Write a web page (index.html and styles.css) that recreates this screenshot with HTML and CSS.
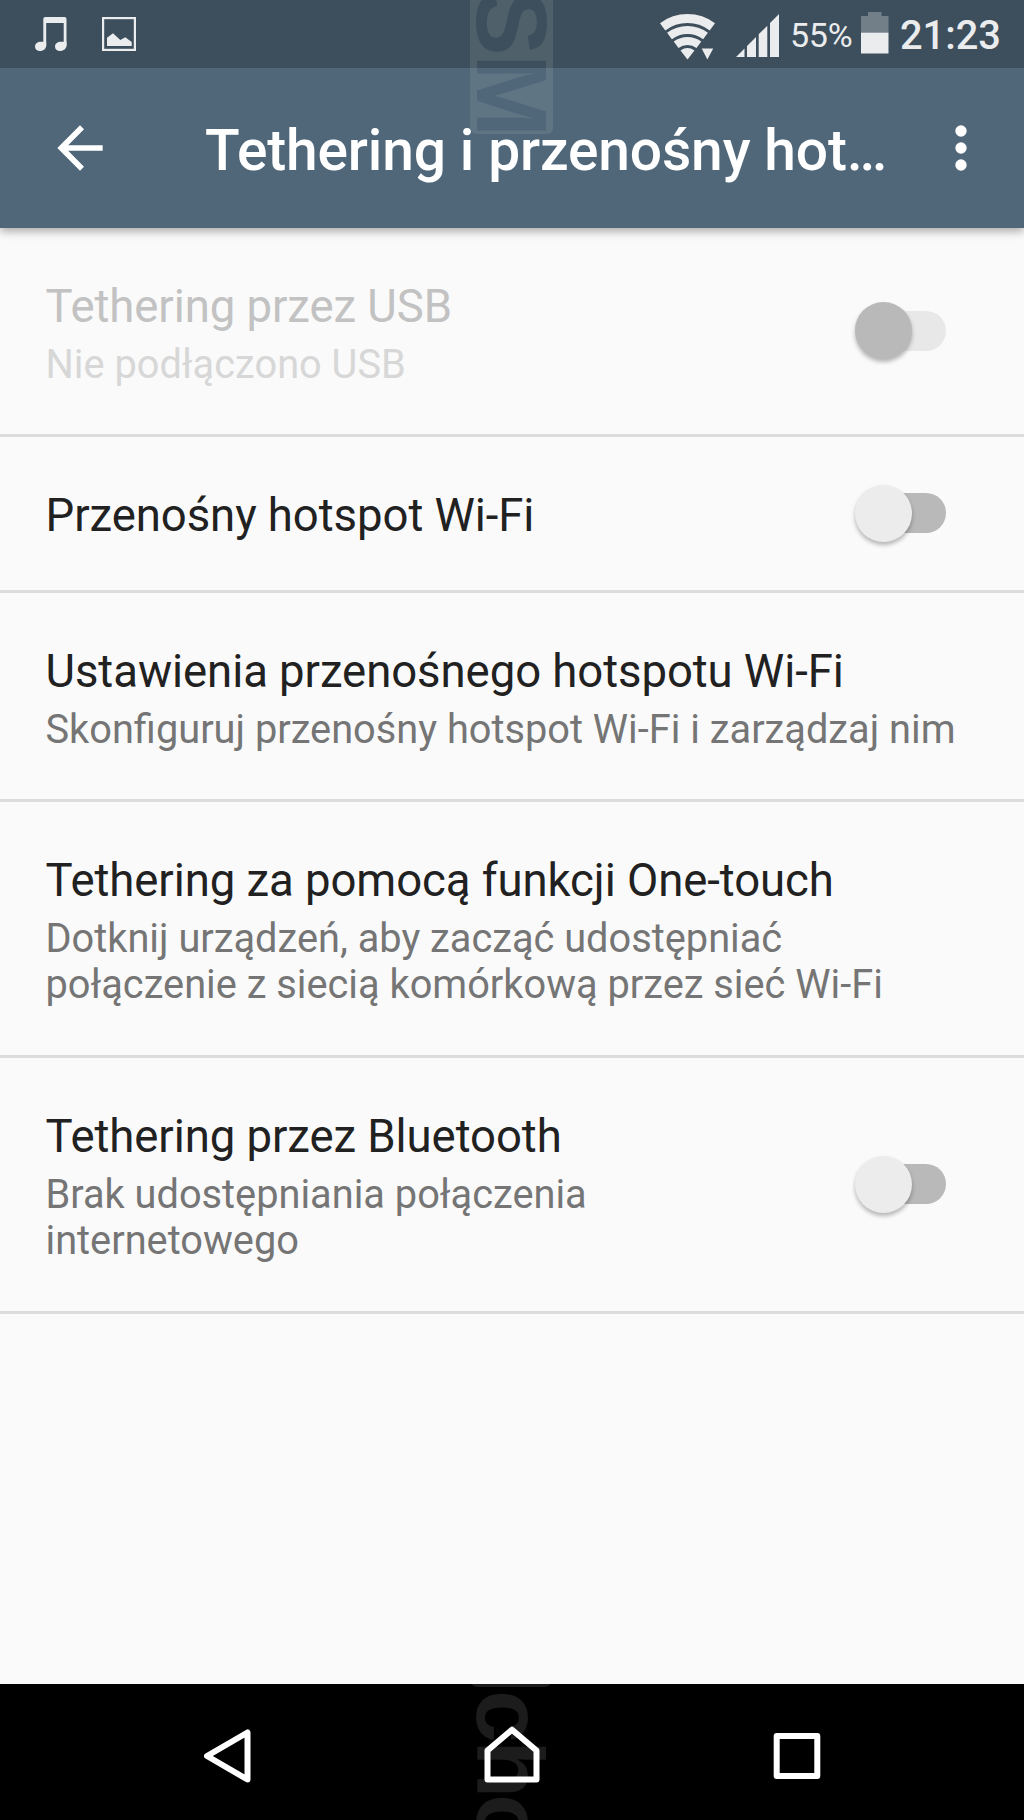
FILE: index.html
```html
<!DOCTYPE html>
<html lang="pl">
<head>
    <meta charset="UTF-8">
    <meta name="viewport" content="width=device-width, initial-scale=1.0">
    <title>Tethering i przenośny hotspot</title>
    <link rel="stylesheet" href="styles.css">
</head>
<body>
    <div class="phone">
        <!-- status bar -->
        <div class="status-bar">
            <svg class="music" width="32" height="34" viewBox="0 0 32 34">
                <path d="M8.3 2a2 2 0 0 1 2-2h19.200a2 2 0 0 1 2 2V29h-2.800V6H11.200V29H8.300z"/>
                <path d="M0 29.500C0 26.500 2.500 24.800 6 24.800H11.200V28.500C11.200 31.500 8.500 34 5 34 2 34 0 32.300 0 29.500z"/>
                <path d="M20 29.500C20 26.500 22.500 24.800 26 24.800H31.500V28.500C31.500 31.500 28.500 34 25 34 22 34 20 32.300 20 29.500z"/>
            </svg>
            <svg class="picture" width="34" height="34" viewBox="0 0 34 34">
                <rect x="1.100" y="1.100" width="31.800" height="31.800" fill="none" stroke="#eaecee" stroke-width="2.200"/>
                <path d="M5 20.800L11 16.200L18.300 23L23.300 20.300L29.700 25V29H5z"/>
            </svg>
            <div class="status-right">
                <svg class="wifi" width="55" height="46" viewBox="0 0 55 46">
                    <g fill="none" stroke="#eaecee">
                        <path stroke-width="9" d="M2.600 12.800A41.500 41.500 0 0 1 52.400 12.800"/>
                        <path stroke-width="8" d="M9.500 22A30 30 0 0 1 45.500 22"/>
                        <path stroke-width="8" d="M16.100 30.800A19 19 0 0 1 38.900 30.800"/>
                    </g>
                    <path d="M20.500 36.500A12.300 12.300 0 0 1 34.500 36.500L27.500 45.500z"/>
                    <path d="M41.700 34.500H53.200L47.400 45.500z"/>
                </svg>
                <svg class="signal" width="43" height="43" viewBox="0 0 43 43">
                    <path d="M0 43L8.500 34.500V43zM11 43V32L20 23V43zM22.700 43V20.300L31.300 11.700V43zM34 43V9L43 0V43z"/>
                </svg>
                <span class="percent">55%</span>
                <svg class="battery" width="28" height="42" viewBox="0 0 28 42">
                    <path fill="#727f89" d="M0 4H7V0H20.500V4H27.500V21H0z"/>
                    <path d="M0 20.700H27.500V41.500H0z"/>
                </svg>
                <span class="clock">21:23</span>
            </div>
        </div>

        <!-- app bar -->
        <div class="app-bar">
            <svg class="back" width="68" height="68" viewBox="0 0 24 24">
                <path d="M20 11H7.830l5.590-5.590L12 4l-8 8 8 8 1.410-1.410L7.830 13H20v-2z"/>
            </svg>
            <h1>Tethering i przenośny hot…</h1>
            <svg class="more" width="68" height="68" viewBox="0 0 24 24">
                <circle cx="12" cy="6" r="2"/>
                <circle cx="12" cy="12" r="2"/>
                <circle cx="12" cy="18" r="2"/>
            </svg>
        </div>

        <!-- watermark over both bars -->
        <svg class="watermark" width="83" height="134" viewBox="0 0 83 134">
            <defs>
                <linearGradient id="bars" gradientUnits="userSpaceOnUse" x1="0" y1="0" x2="136" y2="0">
                    <stop offset="50%" stop-color="#3d4e5c"/>
                    <stop offset="50%" stop-color="#50677a"/>
                </linearGradient>
            </defs>
            <rect y="-20" width="83" height="154" rx="6" fill="#aec0b4" fill-opacity=".17"/>
            <text class="mark" transform="translate(7 0) rotate(90)" x="-11 54" y="0" fill="url(#bars)">SM</text>
        </svg>

        <!-- settings -->
        <div class="list">
            <div class="row disabled">
                <div class="text">
                    <h2>Tethering przez USB</h2>
                    <p>Nie podłączono USB</p>
                </div>
                <div class="switch"><span class="thumb"></span></div>
            </div>
            <div class="row single">
                <div class="text">
                    <h2>Przenośny hotspot Wi-Fi</h2>
                </div>
                <div class="switch"><span class="thumb"></span></div>
            </div>
            <div class="row">
                <div class="text">
                    <h2>Ustawienia przenośnego hotspotu Wi-Fi</h2>
                    <p>Skonfiguruj przenośny hotspot Wi-Fi i zarządzaj nim</p>
                </div>
            </div>
            <div class="row tall">
                <div class="text">
                    <h2>Tethering za pomocą funkcji One-touch</h2>
                    <p>Dotknij urządzeń, aby zacząć udostępniać<br>połączenie z siecią komórkową przez sieć Wi-Fi</p>
                </div>
            </div>
            <div class="row tall">
                <div class="text">
                    <h2>Tethering przez Bluetooth</h2>
                    <p>Brak udostępniania połączenia<br>internetowego</p>
                </div>
                <div class="switch"><span class="thumb"></span></div>
            </div>
        </div>

        <!-- navigation bar -->
        <div class="nav-bar">
            <svg class="nav-mark" width="83" height="136" viewBox="0 0 83 136">
                <rect x="1" y="-20" width="80" height="23" rx="6" fill="#1c1c1c"/>
                <text class="mark small" transform="translate(7 0) rotate(90)" x="6 56 110" y="0" fill="#1c1c1c">cho</text>
            </svg>
            <svg class="nav-icon" width="60" height="60" viewBox="0 0 60 60">
                <path d="M50.500 6.500V53.500L10 30z"/>
            </svg>
            <svg class="nav-icon" width="60" height="60" viewBox="0 0 60 60">
                <path d="M5.500 53.500V24.500L30 3.700L54.500 24.500V53.500z"/>
            </svg>
            <svg class="nav-icon" width="60" height="60" viewBox="0 0 60 60">
                <path d="M9.700 10H50.300V50H9.700z"/>
            </svg>
        </div>
    </div>
</body>
</html>
```
FILE: styles.css
```css
* {
    margin: 0;
    padding: 0;
    box-sizing: border-box;
}

body {
    font-family: Roboto, "Liberation Sans", sans-serif;
    background: #fafafa;
}

svg {
    display: block;
    flex-shrink: 0;
}

.phone {
    position: relative;
    display: flex;
    flex-direction: column;
    width: 1024px;
    height: 1820px;
    overflow: hidden;
    background: #fafafa;
}

/* status bar */
.status-bar {
    position: relative; /* stays above the app bar shadow */
    display: flex;
    align-items: flex-start;
    height: 68px;
    padding-left: 35px;
    background: #3d4e5c;
    color: #eaecee;
    fill: #eaecee;
}

.music {
    margin-top: 17px;
}

.picture {
    margin: 17px 0 0 35px;
}

.status-right {
    display: flex;
    margin-left: auto;
    padding-right: 22px;
}

.wifi {
    margin: 14px 21px 0 0;
}

.signal {
    margin: 14px 11px 0 0;
}

.percent {
    width: 71px;
    margin-top: 15px;
    font-size: 34.1px;
    line-height: 40px;
    letter-spacing: -0.3px;
}

.battery {
    margin-top: 12px;
}

.clock {
    width: 102px;
    margin: 12px 0 0 11px;
    font-size: 39.8px;
    font-weight: 500;
    line-height: 47px;
}

/* app bar */
.app-bar {
    display: flex;
    align-items: center;
    height: 160px;
    padding: 0 29px 0 46px;
    background: #50677a;
    box-shadow: 0 3px 9px rgba(0, 0, 0, 0.35);
    color: #fff;
    fill: #fff;
}

.app-bar h1 {
    position: relative;
    z-index: 2;
    flex: 1;
    margin-left: 91px;
    padding-top: 5px;
    font-size: 56.9px;
    font-weight: 500;
    line-height: 67px;
    letter-spacing: -0.14px;
    white-space: nowrap;
}

.watermark {
    position: absolute;
    top: 0;
    left: 470px;
    z-index: 1;
}

.mark {
    font-family: "Liberation Sans", Arial, sans-serif;
    font-size: 100px;
    font-weight: 700;
}

.mark.small {
    font-size: 95px;
}

/* settings list */
.list {
    flex: 1;
}

.row {
    display: flex;
    align-items: center;
    height: 209px;
    padding: 0 78px 0 45.5px;
    border-bottom: 3px solid #dcdcdc;
}

.row.single {
    height: 156px;
}

.row.tall {
    height: 256px;
}

.text {
    flex: 1;
    align-self: flex-start;
    padding-top: 52px;
    white-space: nowrap;
}

.row h2 {
    color: #212121;
    font-size: 45.5px;
    font-weight: 400;
    line-height: 54px;
    letter-spacing: -0.06px;
}

.row p {
    margin-top: 7.5px;
    color: #757575;
    font-size: 39.75px;
    line-height: 46.7px;
}

.disabled h2 {
    color: #c2c2c2;
}

.disabled p {
    color: #d7d7d7;
}

/* switch */
.switch {
    position: relative;
    width: 80px;
    height: 40px;
    margin-bottom: 1px;
    background: #b9b9b9;
    border-radius: 20px;
}

.thumb {
    position: absolute;
    top: -8.5px;
    left: -11px;
    width: 57px;
    height: 57px;
    border-radius: 50%;
    background: #ececec;
    box-shadow: 0 3px 4px rgba(0, 0, 0, 0.28);
}

.disabled .switch {
    background: #e8e8e8;
}

.disabled .thumb {
    background: #b9b9b9;
}

/* navigation bar */
.nav-bar {
    position: relative;
    display: flex;
    justify-content: center;
    gap: 225px;
    height: 136px;
    padding-top: 42px;
    background: #000;
}

.nav-icon {
    position: relative;
    fill: none;
    stroke: #fff;
    stroke-width: 6;
    stroke-linejoin: round;
}

.nav-mark {
    position: absolute;
    top: 0;
    left: 470px;
}
```
